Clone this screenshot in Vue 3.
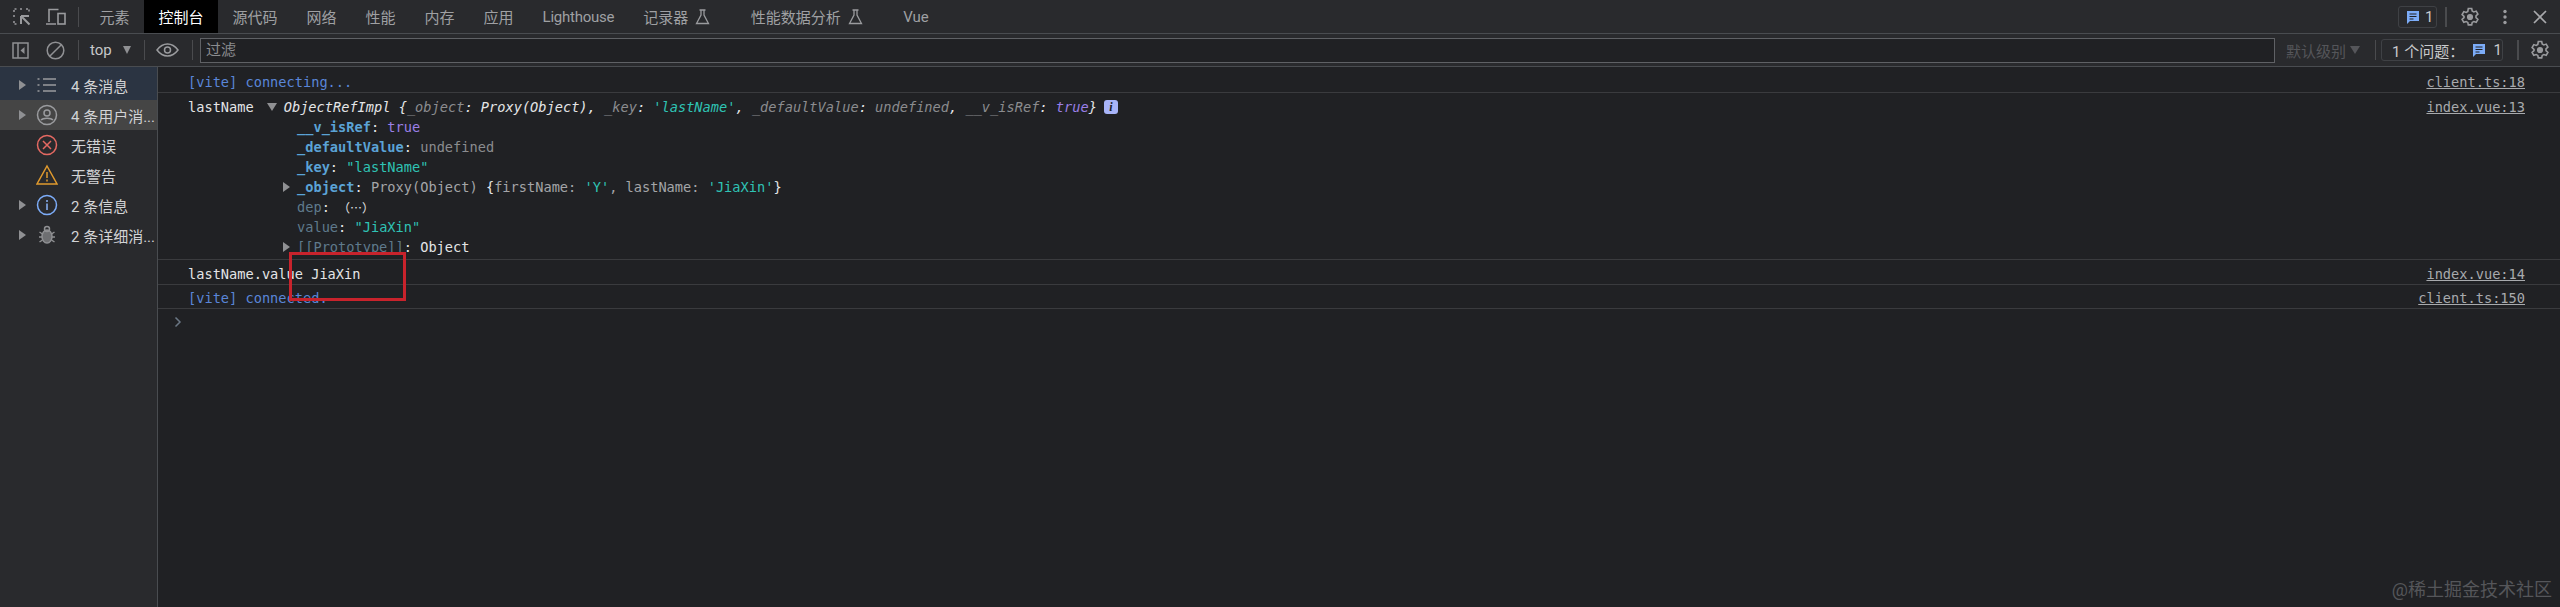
<script setup>
const tabs = [
  { label: '元素' },
  { label: '控制台', active: true },
  { label: '源代码' },
  { label: '网络' },
  { label: '性能' },
  { label: '内存' },
  { label: '应用' },
  { label: 'Lighthouse', tight: true },
  { label: '记录器', flask: true },
  { label: '性能数据分析', flask: true },
  { label: 'Vue' }
]
const sideItems = [
  { label: '4 条消息', icon: 'list', arrow: true, cls: 'sel' },
  { label: '4 条用户消...', icon: 'user', arrow: true, cls: 'hov' },
  { label: '无错误', icon: 'error' },
  { label: '无警告', icon: 'warn' },
  { label: '2 条信息', icon: 'info', arrow: true },
  { label: '2 条详细消...', icon: 'bug', arrow: true }
]
</script>

<template>
  <div class="devtools">
    <header class="tabbar">
      <div class="iconset">
        <svg class="ico" width="20" height="20" viewBox="0 0 20 20" fill="none" stroke="#9a9b9e" stroke-width="1.5">
          <path d="M2 5V2h3M8 2h3M14 2h3v3M2 8v3M2 14v3h3" stroke-dasharray="2 1.5" />
          <path d="M9 9h8M9 9v8M9.500 9.500l8 8" stroke-width="2" />
        </svg>
        <svg class="ico dev" width="22" height="20" viewBox="0 0 22 20" fill="none" stroke="#9a9b9e" stroke-width="1.600">
          <path d="M4 15V2.500h9.500M1 17h10" />
          <rect x="13" y="6.500" width="7" height="10.500" />
        </svg>
        <i class="sep"></i>
      </div>
      <div v-for="t in tabs" :key="t.label" class="tab" :class="{ active: t.active, lab: t.flask, tight: t.tight }">
        <span>{{ t.label }}</span>
        <svg v-if="t.flask" width="15" height="16" viewBox="0 0 15 16" fill="none" stroke="#9a9b9e" stroke-width="1.300">
          <path d="M4.500 1h6M6 1v5L1.500 14.500h12L9 6V1" />
        </svg>
      </div>
      <div class="grow"></div>
      <div class="chip small">
        <svg width="14" height="14" viewBox="0 0 14 14"><path d="M1 1h12v10H4l-3 3z" fill="#7cacf8" /><path d="M3.500 4h7M3.500 6.500h7M3.500 9h4" stroke="#202124" stroke-width="1.200" /></svg>
        <span>1</span>
      </div>
      <i class="sep tall"></i>
      <svg class="gear g1" width="20" height="20" viewBox="0 0 20 20" fill="none" stroke="#9a9b9e" stroke-width="1.600">
        <path d="M8.300 1.500h3.400l.5 2.500 1.600.9 2.400-.8 1.700 3-1.900 1.700v1.800l1.900 1.700-1.700 3-2.400-.8-1.600.9-.5 2.500H8.300l-.5-2.500-1.600-.9-2.400.8-1.700-3 1.900-1.700V9.300L2.100 7.600l1.700-3 2.400.8 1.600-.9z" />
        <circle cx="10" cy="10" r="2.300" fill="#9a9b9e" />
      </svg>
      <svg class="dots" width="6" height="16" viewBox="0 0 6 16" fill="#9a9b9e"><circle cx="3" cy="2.500" r="1.700" /><circle cx="3" cy="8" r="1.700" /><circle cx="3" cy="13.500" r="1.700" /></svg>
      <svg class="close" width="14" height="14" viewBox="0 0 14 14" stroke="#a8a9ac" stroke-width="1.700"><path d="M1 1l12 12M13 1L1 13" /></svg>
    </header>

    <div class="toolbar">
      <svg class="t-side" width="17" height="17" viewBox="0 0 17 17" fill="none" stroke="#8f9093" stroke-width="1.500">
        <rect x="1" y="1" width="15" height="15" /><path d="M6 1v15" /><path d="M12.500 5v7L8.500 8.500z" fill="#8f9093" stroke="none" />
      </svg>
      <svg class="t-clear" width="19" height="19" viewBox="0 0 19 19" fill="none" stroke="#8f9093" stroke-width="1.500">
        <circle cx="9.500" cy="9.500" r="8.300" /><path d="M3.700 15.300L15.300 3.700" />
      </svg>
      <i class="sep"></i>
      <span class="ctx">top</span>
      <i class="tri down ctx-tri"></i>
      <i class="sep"></i>
      <svg class="t-eye" width="23" height="14" viewBox="0 0 23 14" fill="none" stroke="#9a9b9e" stroke-width="1.500">
        <path d="M1 7c3-4 6.500-6 10.500-6S19 3 22 7c-3 4-6.500 6-10.500 6S4 11 1 7z" /><circle cx="11.500" cy="7" r="3" />
      </svg>
      <i class="sep"></i>
      <div class="filter">过滤</div>
      <span class="level">默认级别</span>
      <i class="tri down lvl-tri"></i>
      <i class="sep lvl-sep"></i>
      <div class="chip issues">
        <span>1 个问题：</span>
        <svg width="14" height="14" viewBox="0 0 14 14"><path d="M1 1h12v10H4l-3 3z" fill="#7cacf8" /><path d="M3.500 4h7M3.500 6.500h7M3.500 9h4" stroke="#202124" stroke-width="1.200" /></svg>
        <span>1</span>
      </div>
      <i class="sep lvl-sep2"></i>
      <svg class="gear g2" width="20" height="20" viewBox="0 0 20 20" fill="none" stroke="#9a9b9e" stroke-width="1.600">
        <path d="M8.300 1.500h3.400l.5 2.500 1.600.9 2.400-.8 1.700 3-1.900 1.700v1.800l1.900 1.700-1.700 3-2.400-.8-1.600.9-.5 2.500H8.300l-.5-2.500-1.600-.9-2.400.8-1.700-3 1.900-1.700V9.300L2.100 7.600l1.700-3 2.400.8 1.600-.9z" />
        <circle cx="10" cy="10" r="2.300" fill="#9a9b9e" />
      </svg>
    </div>

    <div class="body">
      <aside class="side">
        <div v-for="s in sideItems" :key="s.label" class="side-row" :class="s.cls">
          <i class="tri right" :class="{ hidden: !s.arrow }"></i>
          <svg class="side-ico" width="22" height="22" viewBox="0 0 22 22" fill="none">
            <g v-if="s.icon === 'list'" stroke="#9a9b9e" stroke-width="1.500">
              <path d="M7 5h13M7 11h13M7 17h13" /><path d="M1.500 5h2M1.500 11h2M1.500 17h2" />
            </g>
            <g v-else-if="s.icon === 'user'" stroke="#9a9b9e" stroke-width="1.500">
              <circle cx="11" cy="11" r="9.500" /><circle cx="11" cy="9" r="3" /><path d="M5 16c2-2.500 10-2.500 12 0" />
            </g>
            <g v-else-if="s.icon === 'error'" stroke="#e46962" stroke-width="1.500">
              <circle cx="11" cy="11" r="9.500" /><path d="M7 7l8 8M15 7l-8 8" />
            </g>
            <g v-else-if="s.icon === 'warn'" stroke="#e09a2e" stroke-width="1.500">
              <path d="M11 2l10 18H1z" /><path d="M11 8v6M11 15.500v2" />
            </g>
            <g v-else-if="s.icon === 'info'" stroke="#7cacf8" stroke-width="1.500">
              <circle cx="11" cy="11" r="9.500" /><path d="M11 9.500V16M11 6v2" stroke="#8ab4f8" />
            </g>
            <g v-else stroke="#8f9093" stroke-width="1.500">
              <ellipse cx="11" cy="12.500" rx="5" ry="6.500" fill="#6e6f72" /><circle cx="11" cy="5" r="2.500" /><path d="M3.500 8l3 2M18.500 8l-3 2M3 13h3M19 13h-3M3.500 18l3-2M18.500 18l-3-2" />
            </g>
          </svg>
          <span class="side-label">{{ s.label }}</span>
        </div>
      </aside>

      <main class="console">
        <div class="msg m1">
          <span class="blue">[vite] connecting...</span>
          <a class="src">client.ts:18</a>
        </div>
        <div class="msg obj">
          <div class="line first">
            <span class="txt">lastName</span>
            <i class="tri down obj-tri"></i>
            <em class="it"><span class="txt">ObjectRefImpl {</span><span class="grey">_object</span><span class="txt">: Proxy(Object), </span><span class="grey">_key</span><span class="txt">: </span><span class="teal">'lastName'</span><span class="txt">, </span><span class="grey">_defaultValue</span><span class="txt">: </span><span class="grey">undefined</span><span class="txt">, </span><span class="grey">__v_isRef</span><span class="txt">: </span><span class="violet">true</span><span class="txt">}</span></em>
            <b class="info-badge">i</b>
            <a class="src">index.vue:13</a>
          </div>
          <div class="line prop"><b class="key">__v_isRef</b><span class="txt">: </span><span class="violet">true</span></div>
          <div class="line prop"><b class="key">_defaultValue</b><span class="txt">: </span><span class="grey">undefined</span></div>
          <div class="line prop"><b class="key">_key</b><span class="txt">: </span><span class="teal">"lastName"</span></div>
          <div class="line prop"><i class="tri right prop-tri"></i><b class="key">_object</b><span class="txt">: </span><span class="soft">Proxy(Object) </span><span class="txt">{</span><span class="soft">firstName: </span><span class="teal">'Y'</span><span class="soft">, lastName: </span><span class="teal">'JiaXin'</span><span class="txt">}</span></div>
          <div class="line prop"><span class="dim">dep</span><span class="txt">: </span><span class="txt cjkdots">（…）</span></div>
          <div class="line prop"><span class="dim">value</span><span class="txt">: </span><span class="teal">"JiaXin"</span></div>
          <div class="line prop"><i class="tri right prop-tri"></i><span class="dim">[[Prototype]]</span><span class="txt">: Object</span></div>
        </div>
        <div class="msg m3">
          <span class="txt">lastName.value JiaXin</span>
          <a class="src">index.vue:14</a>
        </div>
        <div class="msg m4">
          <span class="blue">[vite] connected.</span>
          <a class="src">client.ts:150</a>
        </div>
        <div class="prompt">
          <svg width="8" height="12" viewBox="0 0 8 12" fill="none" stroke="#6b7785" stroke-width="1.500"><path d="M1.500 1.500L6 6l-4.500 4.500" /></svg>
        </div>
        <div class="redbox"></div>
      </main>
    </div>
    <div class="watermark">@稀土掘金技术社区</div>
  </div>
</template>

<style>
html, body { margin: 0; background: #202124; }
</style>

<style scoped>
.devtools {
  position: relative;
  width: 2560px;
  height: 607px;
  overflow: hidden;
  display: flex;
  flex-direction: column;
  background: #202124;
  font-family: Roboto, "Noto Sans CJK SC", sans-serif;
  font-size: 15px;
  color: #9fa0a3;
}
.tabbar {
  height: 33px;
  flex: none;
  display: flex;
  align-items: center;
  background: #292a2d;
  border-bottom: 1px solid #494c50;
}
.iconset { width: 85px; display: flex; align-items: center; flex: none; height: 100%; }
.ico { margin-left: 12px; flex: none; }
.dev { margin-left: 13px; }
.iconset .sep { margin-left: 11px; }
.sep { display: block; flex: none; width: 1px; height: 20px; background: #4a4b4e; }
.tab {
  height: 33px;
  padding: 0 14.500px;
  display: flex;
  align-items: center;
  gap: 7px;
  white-space: nowrap;
  flex: none;
  color: #9fa0a3;
}
.tab.active { background: #000; color: #fff; }
.tab.lab { padding-right: 26px; }
.tab.tight { letter-spacing: -0.250px; }
.grow { flex: 1; }
.chip {
  display: flex;
  align-items: center;
  border: 1px solid #3f4145;
  border-radius: 3px;
  color: #c8c9cb;
  box-sizing: border-box;
}
.chip.small { width: 39px; height: 22px; padding-left: 7px; gap: 5px; margin-right: 8px; }
.sep.tall { height: 20px; width: 2px; }
.g1 { margin-left: 13px; }
.dots { margin-left: 22px; }
.close { margin-left: 25px; margin-right: 13px; }
.toolbar {
  height: 32px;
  flex: none;
  display: flex;
  align-items: center;
  background: #292a2d;
  border-bottom: 1px solid #494c50;
}
.t-side { margin-left: 12px; flex: none; }
.t-clear { margin-left: 17px; flex: none; }
.toolbar > .sep { margin-left: 13px; }
.ctx { margin-left: 11px; width: 22px; color: #c6c7c9; flex: none; }
.ctx-tri { margin-left: 11px; border-width: 8px 4.500px 0 !important; }
.t-eye { margin-left: 11px; flex: none; }
.filter {
  flex: 1;
  margin-left: 7px;
  height: 25px;
  box-sizing: border-box;
  border: 1px solid #5f6165;
  background: #202124;
  padding-left: 5px;
  line-height: 22px;
  color: #8b8c8f;
}
.level { margin-left: 11px; color: #55565a; flex: none; }
.lvl-tri { margin-left: 4px; border-top-color: #55565a !important; }
.toolbar > .lvl-sep { margin-left: 15px; }
.chip.issues { width: 122px; height: 22px; margin-left: 5px; padding-left: 10px; flex: none; }
.issues span:first-child { width: 80px; }
.issues svg { margin-right: 8px; flex: none; }
.toolbar > .lvl-sep2 { margin-left: 14px; width: 2px; }
.g2 { margin-left: 11px; margin-right: 10px; flex: none; }
.tri { display: inline-block; flex: none; width: 0; height: 0; border-style: solid; border-color: transparent; }
.tri.down { border-width: 8px 5px 0; border-top-color: #8f9093; }
.tri.right { border-width: 5px 0 5px 7px; border-left-color: #8f9093; }
.tri.hidden { visibility: hidden; }
.body { flex: 1; display: flex; min-height: 0; }
.side {
  width: 157px;
  flex: none;
  background: #292a2d;
  border-right: 1px solid #494c50;
}
.side-row {
  height: 30px;
  display: flex;
  align-items: center;
  padding-left: 19px;
  white-space: nowrap;
}
.side-row:first-child { height: 33px; padding-top: 3px; box-sizing: border-box; background: #2b3442; }
.side-row.hov { background: #454545; }
.side-ico { margin-left: 10px; flex: none; width: 22px; }
.side-label {
  margin-left: 13px;
  color: #d2d3d5;
  font-size: 15px;
}
.console {
  flex: 1;
  position: relative;
  min-width: 0;
  font-family: "DejaVu Sans Mono", "Liberation Mono", monospace;
  font-size: 13.650px;
}
.msg {
  padding: 0 35px 0 30px;
  border-bottom: 1px solid #3a3b3e;
  box-sizing: border-box;
  display: flex;
  justify-content: space-between;
  align-items: center;
  white-space: pre;
}
.m1 { height: 26px; padding-top: 4px; }
.m3 { height: 25px; padding-top: 3px; }
.m4 { height: 24px; padding-top: 3px; }
.msg.obj { height: 167px; padding-top: 4px; display: block; }
.line { height: 20px; display: flex; align-items: center; white-space: pre; }
.line.prop { padding-left: 109px; position: relative; }
.obj-tri { margin: 0 7px 0 13px; border-width: 8px 5.500px 0; }
.prop-tri { position: absolute; left: 95px; top: 5px; }
.src { color: #a8aaad; text-decoration: underline; }
.first .src { margin-left: auto; }
.txt { color: #e4e5e7; }
.blue { color: #5a86d8; }
.grey { color: #8b8c8f; }
.soft { color: #a4a5a8; }
.teal { color: #2fc3b4; }
.violet { color: #9a7fe6; }
.dim { color: #5f7a8c; }
.key { color: #5ba3d6; font-weight: 700; }
.it { font-style: italic; }
.cjkdots { font-family: "Noto Sans CJK SC", sans-serif; font-size: 12px; }
.info-badge {
  display: flex;
  align-items: center;
  justify-content: center;
  width: 14px;
  height: 14px;
  margin-left: 7px;
  border-radius: 3px;
  background: #a8b4f8;
  color: #202124;
  font: italic 700 12px "Liberation Serif", serif;
}
.prompt { height: 26px; padding-left: 16px; display: flex; align-items: center; }
.redbox {
  position: absolute;
  left: 131px;
  top: 185px;
  width: 117px;
  height: 49px;
  box-sizing: border-box;
  border: 3px solid #c8232c;
}
.watermark {
  position: absolute;
  right: 8px;
  bottom: 5px;
  font-size: 18px;
  line-height: 24px;
  color: #55565a;
}
</style>
